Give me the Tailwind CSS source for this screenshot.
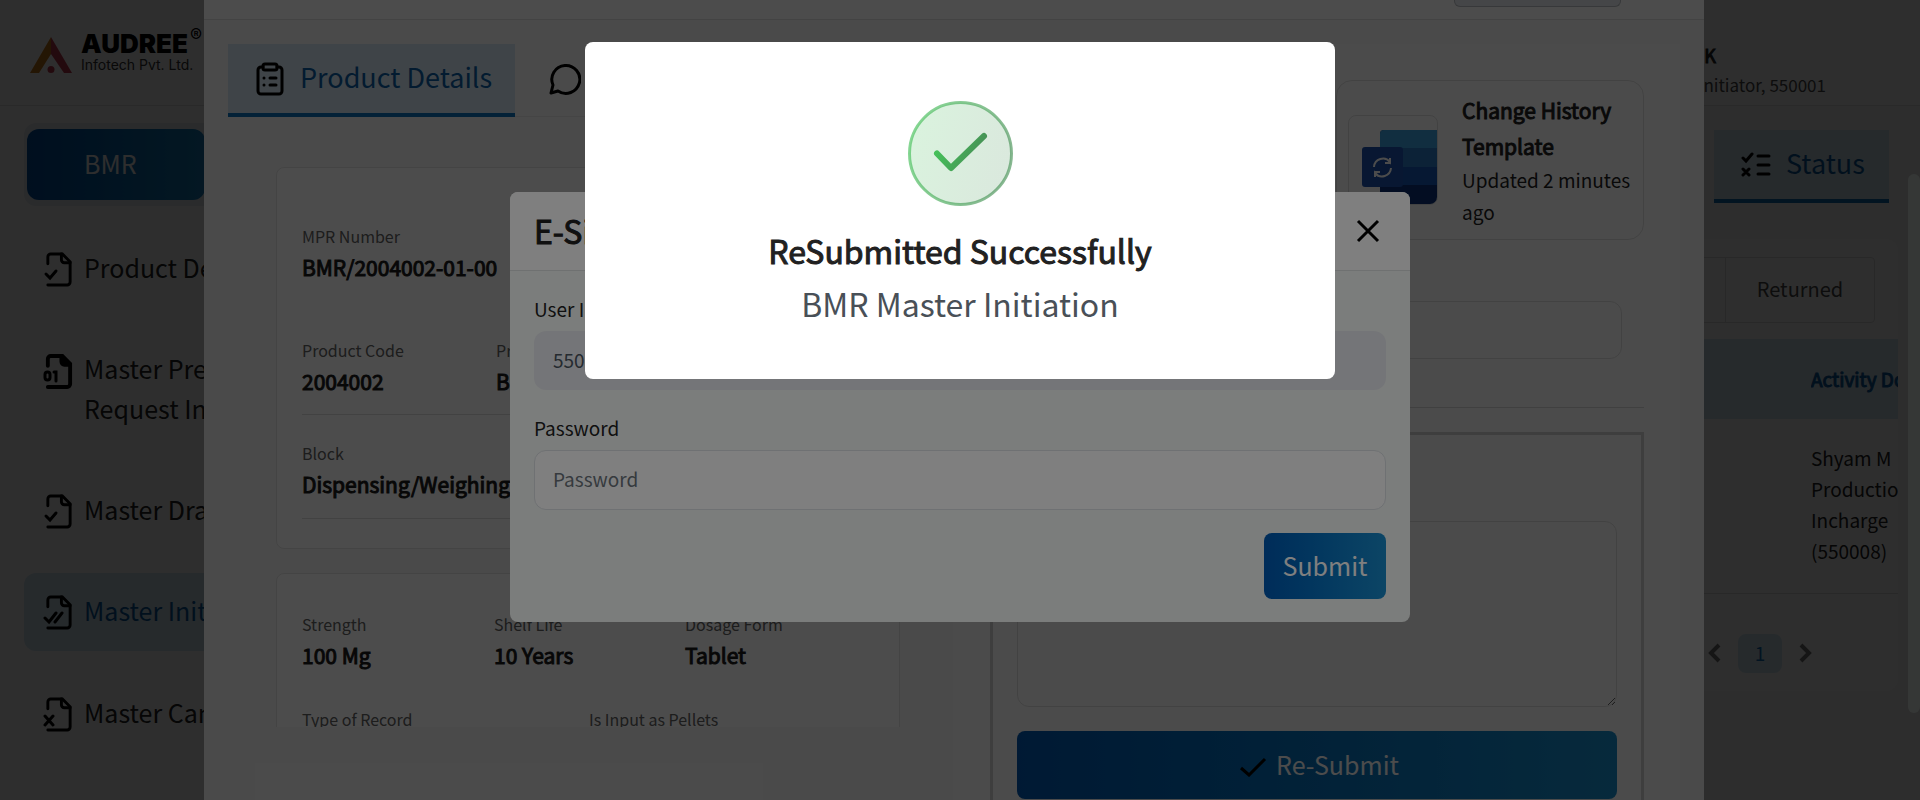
<!DOCTYPE html>
<html lang="en">
<head>
<meta charset="utf-8">
<title>BMR Master Initiation</title>
<script src="https://cdn.jsdelivr.net/npm/@tailwindcss/browser@4"></script>
</head>
<body class="h-screen overflow-hidden bg-white font-['Noto_Sans_CJK_SC',sans-serif] text-[#212121]">

<svg class="hidden" aria-hidden="true">
  <defs>
    <symbol id="file" viewBox="0 0 32 36"><path d="M5 12V5a3 3 0 0 1 3-3h12l8 8v21a3 3 0 0 1-3 3H5" /><path d="M19 2v6a3 3 0 0 0 3 3h6" /></symbol>
  </defs>
</svg>

<!-- Application page -->
<div class="flex h-full flex-col">
  <header class="flex h-[106px] shrink-0 items-center justify-between border-b border-[#e0e0e0] pl-[30px]">
    <a href="#" class="flex items-end gap-[9px]" aria-label="Audree Infotech">
      <svg class="h-[36px] w-[42px]" viewBox="0 0 42 36"><path d="M21 0 0 36h9l12-19z" fill="#c9781a"/><path d="M21 0l21 36h-8L21 17z" fill="#c43a50"/><circle cx="21" cy="32.500" r="3.500" fill="#c43a50"/></svg>
      <span class="flex flex-col font-[Inter,sans-serif] text-black">
        <span class="flex items-start gap-[2px]"><span class="text-[26px] leading-[24px] font-black">AUDREE</span><span class="-mt-[5px] text-[18px] leading-[18px]">®</span></span>
        <span class="text-[14px] leading-[17px] text-[#333]">Infotech Pvt. Ltd.</span>
      </span>
    </a>
    <div class="mr-[94px] self-end pb-[5px] text-right">
      <div class="pr-[110px] text-[18px] leading-[30px] [-webkit-text-stroke:1px]">Kiran K</div>
      <div class="text-[17px] leading-[30px] text-[#4a4a4a]">Initiator, 550001</div>
    </div>
  </header>
  <div class="flex min-h-0 grow">
    <nav class="flex w-[360px] shrink-0 flex-col pt-[17px] pl-[24px] text-[25px]">
      <div class="rounded-xl bg-[#e8edf4] p-[6px] pl-[3px]"><button class="block h-[71px] w-[178px] rounded-xl bg-gradient-to-r from-[#0053a8] to-[#1782c0] pb-[2px] pl-[57px] text-left text-white">BMR</button></div>
      <a href="#" class="mt-[24px] flex h-[78px] items-center gap-[10px] pb-[3px] pl-[19px]"><svg class="mt-[4px] h-[35px] w-[31px] fill-none stroke-black stroke-[3] [stroke-linecap:round]"><use href="#file"/><path d="m3 22 4 4 6-7"/></svg>Product Details</a>
      <a href="#" class="mt-[24px] flex h-[118px] items-start gap-[10px] pt-[16px] pl-[19px] leading-[40px]"><svg class="mt-[6px] h-[35px] w-[31px] shrink-0 fill-none stroke-black stroke-[4] [stroke-linecap:round]"><use href="#file"/><path d="M19 2l9 9h-9z" fill="#000" stroke="none"/><rect x="2" y="18" width="5" height="8" rx="2.500" stroke-width="3"/><path d="M11 18h2v9" stroke-width="3"/></svg><span>Master Preparation<br>Request Initiation</span></a>
      <a href="#" class="mt-[22px] flex h-[78px] items-center gap-[10px] pb-[3px] pl-[19px]"><svg class="mt-[4px] h-[35px] w-[31px] fill-none stroke-black stroke-[3] [stroke-linecap:round]"><use href="#file"/><path d="m3 22 4 4 6-7"/></svg>Master Draft</a>
      <a href="#" class="mt-[23px] flex h-[78px] items-center gap-[10px] rounded-xl bg-[#d3e7f5] pb-[3px] pl-[19px] text-[#0a5ca0]"><svg class="mt-[4px] h-[35px] w-[31px] fill-none stroke-black stroke-[3] [stroke-linecap:round]"><use href="#file"/><path d="m2 23 4 4 7-9M12 27l7-9"/></svg>Master Initiation</a>
      <a href="#" class="mt-[24px] flex h-[78px] items-center gap-[10px] pb-[3px] pl-[19px]"><svg class="mt-[4px] h-[35px] w-[31px] fill-none stroke-black stroke-[3] [stroke-linecap:round]"><use href="#file"/><path d="m2 19 8 9M10 19l-8 9"/></svg>Master Cancel</a>
    </nav>
    <main class="flex grow flex-col items-end bg-[#f8f8f8] pt-[24px]">
      <button class="mr-[31px] flex h-[73px] w-[175px] items-center gap-[15px] border-b-4 border-[#0d6eb8] bg-[#d3e7f5] pl-[27px] text-[27px] text-[#0a5ca0]"><svg class="h-[26px] w-[30px] fill-none stroke-black stroke-[3] [stroke-linecap:round]" viewBox="0 0 30 26"><path d="m2 6 3 3 6-7M2 17l6 6M8 17l-6 6M17 4h11M17 13h11M17 22h11"/></svg><span class="pb-[2px]">Status</span></button>
      <section class="mt-[36px] mr-[22px] flex h-[452px] w-[400px] flex-col rounded-xl bg-white pt-[18px]">
        <div class="mr-[23px] flex h-[66px] self-end rounded border border-[#dcdcdc] text-[20px] text-[#4a4a4a]"><button aria-label="Approved" class="w-[60px]"></button><button class="w-[149px] border-l border-[#dcdcdc] pb-[2px]">Returned</button></div>
        <table class="mt-[16px] w-full table-fixed text-left text-[19px] leading-[31px]">
          <thead><tr class="h-[80px] bg-[#d3e7f5] text-[#0a5ca0]"><th class="w-[313px]"></th><th class="overflow-hidden pb-[2px] font-normal whitespace-nowrap [-webkit-text-stroke:1px]">Activity Done By</th></tr></thead>
          <tbody><tr class="h-[174px] border-b border-[#dcdcdc] align-top"><td class="pt-[24px]"><span class="flex h-[51px] w-[178px] items-center justify-end rounded-lg bg-[#fbe9ec] pr-[25px] pb-[1px] text-[#c2283e]">Returned</span></td><td class="overflow-hidden pt-[23px]">Shyam M Production Incharge (550008)</td></tr></tbody>
        </table>
        <div class="mt-[40px] mr-[86px] flex h-[39px] items-center justify-end gap-[17px] text-[19px]">
          <button aria-label="Previous"><svg class="h-[20px] w-[13px] fill-none stroke-[#757575] stroke-[4]" viewBox="0 0 13 20"><path d="m11 2-8 8 8 8"/></svg></button>
          <button class="h-[39px] w-[44px] rounded-lg bg-[#d3e7f5] text-[#0d6eb8]">1</button>
          <button aria-label="Next"><svg class="h-[20px] w-[13px] fill-none stroke-[#757575] stroke-[4]" viewBox="0 0 13 20"><path d="m2 2 8 8-8 8"/></svg></button>
        </div>
      </section>
    </main>
  </div>
</div>

<!-- Record dialog, with its scrollbar at the window's right edge -->
<div class="fixed inset-0 flex justify-center bg-black/40 pr-[12px]">
  <div class="absolute top-[174px] right-0 h-[539px] w-[12px] rounded-full bg-[#b2b8b6]"></div>
  <div role="dialog" aria-label="Record details" class="flex h-full w-[1500px] flex-col bg-[#f9f9f9]">
    <div class="flex h-[20px] shrink-0 justify-end border-b border-[#e0e0e0] bg-white pr-[83px]"><button aria-label="Filter" class="h-[7px] w-[167px] rounded-b-md border border-t-0 border-[#b8bcc2] bg-[#e8ebf0]"></button></div>
    <div class="flex min-h-0 grow px-[24px] pt-[24px]">
      <section class="flex w-[725px] flex-col">
        <div role="tablist" class="flex h-[73px] shrink-0 border-b border-[#e8e8e8]">
          <button role="tab" aria-selected="true" class="flex h-[73px] w-[287px] items-center gap-[16px] border-b-4 border-[#0d6eb8] bg-[#d3e4f0] pl-[28px] text-[27px] text-[#0a5ca0]"><svg class="h-[34px] w-[28px] fill-none stroke-black stroke-[3]" viewBox="0 0 28 34" stroke-linecap="round"><path d="M7 5H5a3 3 0 0 0-3 3v21a3 3 0 0 0 3 3h18a3 3 0 0 0 3-3V8a3 3 0 0 0-3-3h-2"/><rect x="7" y="2" width="14" height="6" rx="2"/><path d="M8 16h.01M8 23h.01M14 16h6M14 23h6"/></svg><span class="pb-[2px]">Product Details</span></button>
          <button role="tab" aria-label="Comments" class="pb-[2px] pl-[34px]"><svg class="h-[32px] w-[32px] fill-none stroke-black stroke-[3]" viewBox="0 0 32 32"><path d="M2 30l2-8A14 14 0 1 1 9 28z" stroke-linejoin="round"/></svg></button>
        </div>
        <div class="mt-[24px] flex h-[586px] flex-col gap-[24px] overflow-hidden pt-[26px] pr-[53px] pl-[48px] text-[21px] leading-[32px] text-[#1a1a1a]">
          <div class="h-[382px] shrink-0 rounded-lg border border-[#e4e4e4] bg-white px-[25px]">
            <div class="mt-[53px] h-[114px] [-webkit-text-stroke:1px]"><div class="text-[16px] leading-[30px] text-[#616161] [-webkit-text-stroke:0]">MPR Number</div>BMR/2004002-01-00</div>
            <div class="flex h-[80px] border-b border-[#dcdcdc] [-webkit-text-stroke:1px]"><div class="w-[194px]"><div class="text-[16px] leading-[30px] text-[#616161] [-webkit-text-stroke:0]">Product Code</div>2004002</div><div><div class="text-[16px] leading-[30px] text-[#616161] [-webkit-text-stroke:0]">Product Name</div>BMR</div></div>
            <div class="mt-[23px] h-[81px] border-b border-[#dcdcdc] [-webkit-text-stroke:1px]"><div class="text-[16px] leading-[30px] text-[#616161] [-webkit-text-stroke:0]">Block</div>Dispensing/Weighing</div>
          </div>
          <div class="h-[382px] shrink-0 rounded-lg border border-[#e4e4e4] bg-white px-[25px] pt-[35px]">
            <div class="flex h-[95px] [-webkit-text-stroke:1px]"><div class="w-[192px]"><div class="text-[16px] leading-[30px] text-[#616161] [-webkit-text-stroke:0]">Strength</div>100 Mg</div><div class="w-[191px]"><div class="text-[16px] leading-[30px] text-[#616161] [-webkit-text-stroke:0]">Shelf Life</div>10 Years</div><div><div class="text-[16px] leading-[30px] text-[#616161] [-webkit-text-stroke:0]">Dosage Form</div>Tablet</div></div>
            <div class="flex text-[16px] leading-[30px] text-[#616161]"><div class="w-[287px]">Type of Record</div><div>Is Input as Pellets</div></div>
          </div>
        </div>
      </section>
      <section class="flex min-w-0 grow flex-col bg-[#fcfcfc] pr-[36px] pl-[37px]">
        <div class="mt-[36px] flex h-[160px] w-[308px] shrink-0 items-center self-end rounded-2xl border border-[#dedede] pl-[11px]">
          <div class="flex h-[90px] w-[90px] shrink-0 items-end justify-end overflow-hidden rounded-lg border border-[#dedede]">
            <svg class="h-[74px] w-[75px]" viewBox="0 0 75 74"><rect x="18" width="57" height="74" rx="4" fill="#0a2e72"/><path d="M18 18V4a4 4 0 0 1 4-4h53v18z" fill="#3b9ad6"/><path d="M18 18h57v19H18z" fill="#2872b8"/><path d="M18 37h57v18H18z" fill="#1650ac"/><rect y="17" width="41" height="40" rx="3" fill="#1b4fa8"/><path d="M12 37a9 9 0 0 1 16-5v-4m0 5h-5M29 38a9 9 0 0 1-16 5v4m0-5h5" fill="none" stroke="#fff" stroke-width="2"/></svg>
          </div>
          <div class="ml-[24px] text-[19px] leading-[32px]"><div class="text-[21px] leading-[36px] [-webkit-text-stroke:1px]">Change History Template</div>Updated 2 minutes ago</div>
        </div>
        <input aria-label="Reference" class="mt-[61px] mr-[22px] ml-[27px] h-[58px] shrink-0 rounded-xl border border-[#dedede]">
        <hr class="mt-[48px] border-[#d6d6d6]">
        <div class="mt-[24px] flex min-h-0 grow flex-col border-[3px] border-b-0 border-[#cfcfcf] px-[24px] pt-[86px]">
          <textarea aria-label="Remarks" class="h-[186px] shrink-0 rounded-xl border border-[#dedede]"></textarea>
          <button class="mt-[24px] flex h-[68px] shrink-0 items-center justify-center gap-[9px] rounded-lg bg-gradient-to-r from-[#0056ad] to-[#178bc8] pl-[4px] text-[25px] text-white"><svg class="mt-[4px] h-[20px] w-[28px] fill-none stroke-black stroke-[3]" viewBox="0 0 28 20"><path d="m2 11 8 7L26 2"/></svg><span class="pb-[1px]">Re-Submit</span></button>
        </div>
      </section>
    </div>
  </div>
</div>

<!-- E-signature dialog -->
<div class="fixed inset-0 flex items-start justify-center bg-black/40 pt-[192px]">
  <form role="dialog" aria-label="E-Signature" class="w-[900px] overflow-hidden rounded-lg bg-[#f7fbf9]">
    <div class="flex h-[79px] items-center justify-between border-b border-[#dfe3e3] bg-white pr-[30px] pl-[24px]"><h2 class="pb-[3px] text-[32px] [-webkit-text-stroke:1px]">E-Signature</h2><button type="button" aria-label="Close"><svg class="h-[24px] w-[24px] fill-none stroke-black stroke-[3]" viewBox="0 0 24 24"><path d="m2 2 20 20M22 2 2 22"/></svg></button></div>
    <div class="flex flex-col px-[24px] pt-[24px] pb-[23px] text-[19px] leading-[28px]">
      <label for="uid" class="mb-[8px]">User ID</label>
      <input id="uid" value="550001" disabled class="h-[59px] rounded-xl bg-[#e9ebf0] px-[19px] pb-[3px] text-[#4a5560]">
      <label for="pw" class="mt-[24px] mb-[8px]">Password</label>
      <input id="pw" type="password" placeholder="Password" class="h-[60px] rounded-xl border border-[#dee2e6] bg-white px-[18px] pb-[3px] placeholder:text-[#6c757d]">
      <button type="button" class="mt-[23px] h-[66px] w-[122px] self-end rounded-lg bg-gradient-to-r from-[#0059b3] to-[#188bcb] pb-[2px] text-[25px] text-white">Submit</button>
    </div>
  </form>
</div>

<!-- Success message -->
<div class="fixed inset-0 flex items-start justify-center bg-black/50 pt-[42px]">
  <div role="alertdialog" aria-label="Success" class="flex h-[337px] w-[750px] flex-col items-center rounded-lg bg-white pt-[59px]">
    <svg class="h-[105px] w-[105px]" viewBox="0 0 105 105"><defs><linearGradient id="g" x2="1" y2=".3"><stop stop-color="#45c65a"/><stop offset="1" stop-color="#479256"/></linearGradient></defs><circle cx="52.500" cy="52.500" r="51" fill="url(#g)" fill-opacity=".2" stroke="url(#g)" stroke-opacity=".65" stroke-width="3"/><path d="M29 52.500 43 67l33-32" fill="none" stroke="url(#g)" stroke-width="6" stroke-linecap="round" stroke-linejoin="round"/></svg>
    <h1 class="mt-[18px] text-[32px] leading-[52px] [-webkit-text-stroke:1px]">ReSubmitted Successfully</h1>
    <p class="text-[32px] leading-[54px] text-[#495057]">BMR Master Initiation</p>
  </div>
</div>
</body>
</html>
